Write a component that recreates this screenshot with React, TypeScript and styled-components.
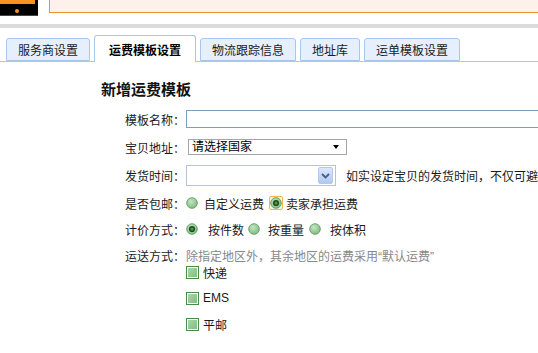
import React from 'react';
import styled, { createGlobalStyle } from 'styled-components';

const GlobalStyle = createGlobalStyle`
  html, body {
    margin: 0;
    padding: 0;
    background: #fff;
    overflow: hidden;
  }
  body {
    font-family: "Liberation Sans", "Noto Sans CJK SC", sans-serif;
    font-size: 12px;
    color: #1a1a1a;
  }
`;

const Page = styled.div`
  width: 538px;
  height: 353px;
  overflow: hidden;
`;

const Header = styled.div`
  display: flex;
  align-items: flex-start;
  gap: 11px;
  height: 16px;
`;

const Logo = styled.div`
  position: relative;
  width: 38px;
  height: 16px;
  background: #000;
  border-bottom: 1px solid #444;
  box-sizing: border-box;

  &:before {
    content: '';
    position: absolute;
    left: 0;
    top: 0;
    width: 35px;
    height: 4px;
    background: #f7941d;
  }

  &:after {
    content: '';
    position: absolute;
    left: 15px;
    top: 9px;
    width: 4px;
    height: 4px;
    border-radius: 50%;
    background: #f7941d;
  }
`;

const Notice = styled.div`
  flex: 1;
  height: 13px;
  box-sizing: border-box;
  background: #fdf1eb;
  border-left: 1px solid #f0902a;
  border-bottom: 1px solid #f0902a;
`;

const Divider = styled.div`
  margin-top: 8px;
  height: 4px;
  background: #dcdcdc;
`;

const TabBar = styled.div`
  display: flex;
  align-items: flex-end;
  gap: 4px;
  height: 34px;
  padding-left: 6px;
  box-sizing: border-box;
  border-bottom: 1px solid #a8c7ee;
`;

const Tab = styled.div<{ $active?: boolean }>`
  display: flex;
  align-items: center;
  justify-content: center;
  box-sizing: border-box;
  height: ${p => (p.$active ? '27px' : '23px')};
  margin-bottom: ${p => (p.$active ? '-1px' : '0')};
  padding: 0 ${p => (p.$active ? '14px' : '11px')};
  border: 1px solid #a8c7ee;
  border-bottom: ${p => (p.$active ? 'none' : '1px solid #a8c7ee')};
  border-radius: 3px 3px 0 0;
  background: ${p => (p.$active ? '#fff' : '#e6f0fd')};
  font-weight: ${p => (p.$active ? 'bold' : 'normal')};
  color: ${p => (p.$active ? '#000' : '#1a1a1a')};
  white-space: nowrap;
`;

const Form = styled.div`
  padding: 18px 0 0 101px;
`;

const Heading = styled.div`
  height: 20px;
  line-height: 20px;
  font-size: 15px;
  font-weight: bold;
  color: #111;
`;

const Row = styled.div<{ $h: number; $mt?: number }>`
  display: flex;
  align-items: center;
  height: ${p => p.$h}px;
  margin-top: ${p => p.$mt ?? 0}px;
  padding-left: 24px;
  white-space: nowrap;
`;

const Label = styled.span`
  width: 61px;
  flex: none;
  color: #1a1a1a;
`;

const TextInput = styled.div`
  width: 380px;
  height: 18px;
  flex: none;
  box-sizing: border-box;
  border: 1px solid #7f9db9;
  background: #fff;
`;

const Select = styled.div`
  position: relative;
  flex: none;
  margin-left: 2px;
  width: 159px;
  height: 16px;
  box-sizing: border-box;
  border: 1px solid #a5a5a5;
  padding-left: 3px;
  line-height: 14px;
  color: #000;

  &:after {
    content: '';
    position: absolute;
    right: 7px;
    top: 5px;
    border-left: 3.5px solid transparent;
    border-right: 3.5px solid transparent;
    border-top: 4px solid #000;
  }
`;

const Combo = styled.div`
  display: flex;
  flex: none;
  justify-content: flex-end;
  align-items: center;
  width: 150px;
  height: 21px;
  box-sizing: border-box;
  border: 1px solid #b9c3d6;
  padding-right: 2px;
  background: #fff;
`;

const ComboButton = styled.div`
  display: flex;
  align-items: center;
  justify-content: center;
  width: 15px;
  height: 17px;
  box-sizing: border-box;
  border: 1px solid #b4c8ee;
  border-radius: 2px;
  background: linear-gradient(#dde8fb, #b3c9f1);
`;

const Hint = styled.span`
  margin-left: 10px;
  color: #1a1a1a;
`;

const Muted = styled.span`
  color: #888;
`;

const OptionText = styled.span<{ $before: number; $after: number }>`
  margin-left: ${p => p.$before}px;
  margin-right: ${p => p.$after}px;
  color: #1a1a1a;
`;

const Focus = styled.span`
  display: inline-flex;
  flex: none;
  align-items: center;
  justify-content: center;
  width: 14px;
  height: 14px;
  box-sizing: border-box;
  border: 1px solid #f2b64c;
  border-radius: 2px;
  background: #fff6df;
`;

const ChoiceList = styled.div`
  display: flex;
  flex-direction: column;
  gap: 6px;
  padding-left: 85px;
`;

const Choice = styled.div`
  display: flex;
  align-items: center;
  gap: 4px;
  height: 20px;
  color: #1a1a1a;
`;

const Box = styled.span`
  width: 13px;
  height: 13px;
  box-sizing: border-box;
  border: 1px solid #4a8a4a;
  background: #fff;
  padding: 1px;
  display: inline-flex;

  &:after {
    content: '';
    flex: 1;
    background: linear-gradient(135deg, #a9d6a9, #82bd82);
  }
`;

const Radio = ({ checked }: { checked?: boolean }) => (
  <svg width="12" height="12" viewBox="0 0 12 12" style={{ flex: 'none' }}>
    <defs>
      <radialGradient id={checked ? 'rgc' : 'rg'} cx="0.4" cy="0.35" r="0.7">
        <stop offset="0" stopColor="#c4e6c4" />
        <stop offset="1" stopColor="#7fb97f" />
      </radialGradient>
    </defs>
    <circle cx="6" cy="6" r="5.3" fill={`url(#${checked ? 'rgc' : 'rg'})`} stroke="#5f9d5f" strokeWidth="0.9" />
    {checked && (
      <>
        <circle cx="6" cy="6" r="3.1" fill="#1f4f1f" />
        <circle cx="6" cy="6" r="1.5" fill="#4f9a4f" />
      </>
    )}
  </svg>
);

const Chevron = () => (
  <svg width="9" height="6" viewBox="0 0 9 6">
    <path d="M1 1 L4.5 4.5 L8 1" fill="none" stroke="#4b5f86" strokeWidth="1.8" />
  </svg>
);

export default function App() {
  return (
    <Page>
      <GlobalStyle />
      <Header>
        <Logo />
        <Notice />
      </Header>
      <Divider />
      <TabBar>
        <Tab>服务商设置</Tab>
        <Tab $active>运费模板设置</Tab>
        <Tab>物流跟踪信息</Tab>
        <Tab>地址库</Tab>
        <Tab>运单模板设置</Tab>
      </TabBar>
      <Form>
        <Heading>新增运费模板</Heading>
        <Row $h={28} $mt={5}>
          <Label>模板名称：</Label>
          <TextInput />
        </Row>
        <Row $h={28}>
          <Label>宝贝地址：</Label>
          <Select>请选择国家</Select>
        </Row>
        <Row $h={29}>
          <Label>发货时间：</Label>
          <Combo>
            <ComboButton>
              <Chevron />
            </ComboButton>
          </Combo>
          <Hint>如实设定宝贝的发货时间，不仅可避</Hint>
        </Row>
        <Row $h={26}>
          <Label>是否包邮：</Label>
          <Radio />
          <OptionText $before={6} $after={5}>自定义运费</OptionText>
          <Focus>
            <Radio checked />
          </Focus>
          <OptionText $before={3} $after={0}>卖家承担运费</OptionText>
        </Row>
        <Row $h={26}>
          <Label>计价方式：</Label>
          <Radio checked />
          <OptionText $before={10} $after={4}>按件数</OptionText>
          <Radio />
          <OptionText $before={8} $after={5}>按重量</OptionText>
          <Radio />
          <OptionText $before={9} $after={0}>按体积</OptionText>
        </Row>
        <Row $h={14} $mt={6}>
          <Label>运送方式：</Label>
          <Muted>除指定地区外，其余地区的运费采用“默认运费”</Muted>
        </Row>
        <ChoiceList>
          <Choice>
            <Box />
            快递
          </Choice>
          <Choice>
            <Box />
            EMS
          </Choice>
          <Choice>
            <Box />
            平邮
          </Choice>
        </ChoiceList>
      </Form>
    </Page>
  );
}
